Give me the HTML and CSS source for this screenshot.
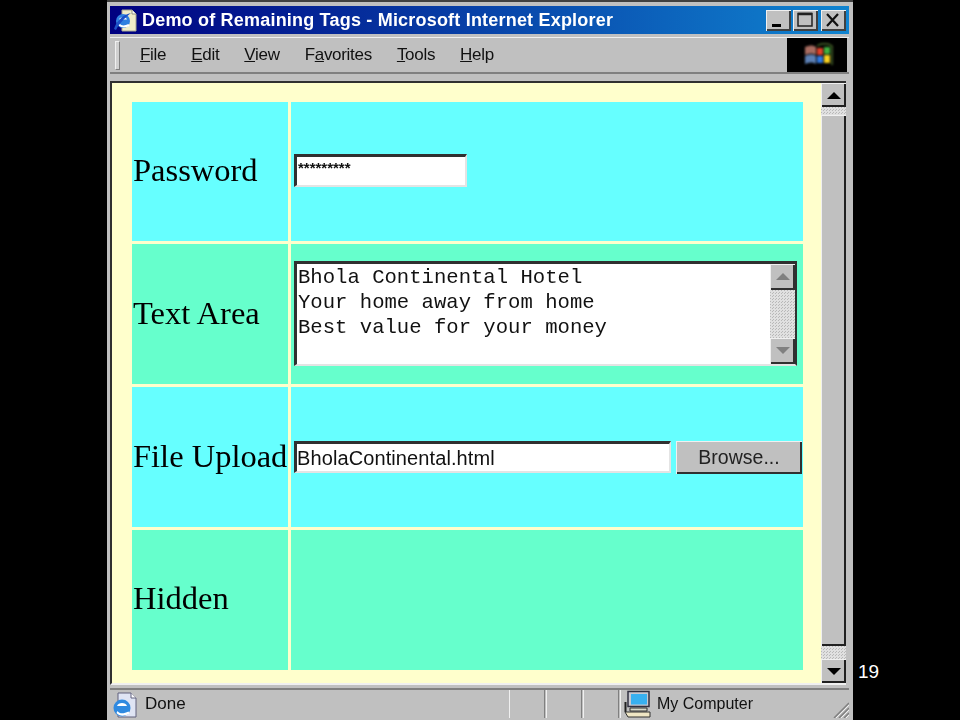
FILE: index.html
```html
<!DOCTYPE html>
<html>
<head>
    <meta charset="UTF-8">
    <link rel="stylesheet" href="styles.css">
</head>
<body>
    <div class="window">
        <div class="titlebar">
            <svg class="title-icon" width="25" height="25" viewBox="0 0 25 25">
                <path d="M9 2h10l4 4v17H9z" fill="#f0ecc8" stroke="#a8a890"/>
                <path d="M19 2v4h4" fill="#fff" stroke="#909080"/>
                <circle cx="10" cy="13" r="7" fill="#2f80e0"/>
                <path d="M6 11.5c1-3 7-3 8 0z" fill="#fff"/>
                <path d="M6.5 15.5c2 2.500 5 2.500 9 .5l1 2c-4 2-8 2-11-.5z" fill="#fff"/>
                <path d="M1 21C3 14 9 7 18 5c-3 2-11 9-15 17z" fill="#1c50c8"/>
            </svg>
            <div class="title-text">Demo of Remaining Tags - Microsoft Internet Explorer</div>
            <div class="title-buttons">
                <div class="win-btn">
                    <svg width="25" height="21" viewBox="0 0 25 21"><rect x="6" y="14" width="9" height="3" fill="#000"/></svg>
                </div>
                <div class="win-btn">
                    <svg width="25" height="21" viewBox="0 0 25 21"><path d="M5 3.500h14v12.500H5z" fill="none" stroke="#222" stroke-width="1.500"/><path d="M5 4h14" stroke="#222" stroke-width="2.500"/></svg>
                </div>
                <div class="win-btn win-btn-close">
                    <svg width="25" height="21" viewBox="0 0 25 21"><path d="M6 4l11 12M17 4L6 16" stroke="#111" stroke-width="2.200"/></svg>
                </div>
            </div>
        </div>

        <div class="menubar">
            <div class="grip"></div>
            <div class="menu-items">
                <span><u>F</u>ile</span>
                <span><u>E</u>dit</span>
                <span><u>V</u>iew</span>
                <span>F<u>a</u>vorites</span>
                <span><u>T</u>ools</span>
                <span><u>H</u>elp</span>
            </div>
            <div class="throbber">
                <svg class="flag" width="30" height="24" viewBox="0 0 30 24">
                    <path d="M1 4c4-2 8-2 11 0v8c-3-2-7-2-11 0z" fill="#a86c60"/>
                    <path d="M1 13c4-2 8-2 11 0v8c-3-2-7-2-11 0z" fill="#5c80b4"/>
                    <rect x="13" y="5" width="6" height="7" fill="#e04028"/>
                    <rect x="20" y="4" width="6" height="7" fill="#40b040"/>
                    <rect x="13" y="13" width="6" height="7" fill="#3078e0"/>
                    <rect x="20" y="12" width="6" height="8" fill="#f8d020"/>
                    <path d="M13 3c4-3 11-3 15 0v19" fill="none" stroke="#4a6a2c" stroke-width="1.500"/>
                </svg>
            </div>
        </div>

        <div class="viewport">
            <div class="page">
                <div class="form-table">
                    <div class="cell label cyan">Password</div>
                    <div class="cell cyan">
                        <div class="field field-password">*********</div>
                    </div>
                    <div class="cell label mint">Text Area</div>
                    <div class="cell mint">
                        <div class="field field-textarea">
                            <div class="textarea-text">Bhola Continental Hotel<br>Your home away from home<br>Best value for your money</div>
                            <div class="mini-scroll">
                                <div class="mini-btn"><div class="arrow-up arrow-grey"></div></div>
                                <div class="dither"></div>
                                <div class="mini-btn"><div class="arrow-down arrow-grey"></div></div>
                            </div>
                        </div>
                    </div>
                    <div class="cell label cyan">File Upload</div>
                    <div class="cell cyan upload">
                        <div class="field field-file">BholaContinental.html</div>
                        <div class="browse">Browse...</div>
                    </div>
                    <div class="cell label mint label-hidden">Hidden</div>
                    <div class="cell mint"></div>
                </div>
            </div>
            <div class="scrollbar">
                <div class="scroll-btn"><div class="arrow-up"></div></div>
                <div class="dither dither-top"></div>
                <div class="thumb"></div>
                <div class="dither dither-bottom"></div>
                <div class="scroll-btn"><div class="arrow-down"></div></div>
            </div>
        </div>

        <div class="statusbar">
            <svg class="status-icon" width="26" height="26" viewBox="0 0 26 26">
                <path d="M6 1h13l5 5v19H6z" fill="#dfe4f4" stroke="#60607c"/>
                <path d="M19 1v5h5" fill="#fff" stroke="#60607c"/>
                <circle cx="10" cy="16" r="8.500" fill="#2f8ae0"/>
                <path d="M5 14c1-4 9-4 10 0z" fill="#fff"/>
                <path d="M5.500 19c2 3 6 3 11 .5l1 2c-5 3-10 3-13-.5z" fill="#fff"/>
            </svg>
            <div class="status-main">Done</div>
            <div class="pane"></div>
            <div class="pane"></div>
            <div class="pane"></div>
            <div class="zone">
                <svg width="28" height="28" viewBox="0 0 28 28">
                    <path d="M4 1.500h21v15H4z" fill="#c8c8d0" stroke="#303040" stroke-width="1.500"/>
                    <rect x="7" y="4" width="16" height="10.500" fill="#38b0f0"/>
                    <path d="M1.500 12v10" stroke="#202020" stroke-width="2"/>
                    <path d="M6 18h17v3H6z" fill="#d8d8c8" stroke="#303030"/>
                    <path d="M1 22l3 5h22v-5z" fill="#efe6c4" stroke="#303030"/>
                </svg>
                <span>My Computer</span>
            </div>
            <svg class="resize-grip" width="18" height="18" viewBox="0 0 18 18">
                <path d="M3 18L18 3M8 18L18 8M13 18l5-5" stroke="#808080" stroke-width="1.500"/>
                <path d="M5 18L18 5M10 18l8-8M15 18l3-3" stroke="#f0f0f0" stroke-width="1"/>
            </svg>
        </div>
    </div>

    <div class="page-number">19</div>
</body>
</html>
```

FILE: styles.css
```css
html, body {
    margin: 0;
    height: 100%;
    overflow: hidden;
    background: #000;
}

body {
    position: relative;
    font-family: "Liberation Sans", Arial, sans-serif;
}

.window {
    width: 746px;
    height: 720px;
    margin-left: 107px;
    box-sizing: border-box;
    padding: 6px 4px 0 3px;
    background: #c0c0c0;
    border-top: 2px solid #404040;
    display: flex;
    flex-direction: column;
    filter: blur(0.4px);
}

.window > .titlebar {
    margin-top: -2px;
}

/* title bar */
.titlebar {
    height: 28px;
    flex: none;
    display: flex;
    align-items: center;
    background: linear-gradient(90deg, #000080, #1084d0);
    color: #fff;
}

.title-icon {
    margin-left: 3px;
    flex: none;
}

.title-text {
    margin-left: 4px;
    flex: 1;
    font-size: 18px;
    font-weight: 700;
    letter-spacing: 0.2px;
    white-space: nowrap;
}

.title-buttons {
    display: flex;
    margin-right: 3px;
}

.win-btn {
    width: 25px;
    height: 21px;
    margin-left: 2px;
    background: #c0c0c0;
    box-shadow: inset 1px 1px 0 #f0f0f0, inset -2px -2px 0 #404040;
}

.win-btn-close {
    margin-left: 3px;
}

.win-btn svg {
    display: block;
}

/* menu */
.menubar {
    height: 37px;
    flex: none;
    margin-top: 3px;
    display: flex;
    align-items: stretch;
    border-top: 1px solid #f0f0f0;
    border-bottom: 2px solid #808080;
    box-sizing: border-box;
}

.grip {
    width: 3px;
    margin: 3px 0 2px 5px;
    background: #d0d0d0;
    border: 1px solid #808080;
    border-left-color: #f0f0f0;
    border-top-color: #f0f0f0;
}

.menu-items {
    flex: 1;
    display: flex;
    align-items: center;
    gap: 25px;
    padding-left: 20px;
    font-size: 17px;
    color: #111;
    letter-spacing: -0.3px;
}

.throbber {
    width: 60px;
    margin-right: 2px;
    padding-left: 4px;
    box-sizing: border-box;
    background: #000;
    display: flex;
    align-items: center;
    justify-content: center;
}

.flag {
    filter: blur(0.8px);
}

/* page area */
.viewport {
    height: 604px;
    flex: none;
    margin: 7px 3px 0 0;
    display: flex;
    border-top: 2px solid #303030;
    border-left: 2px solid #303030;
    border-bottom: 2px solid #f0f0f0;
    box-sizing: border-box;
    background: #ffffcc;
}

.page {
    flex: 1;
    padding: 19px 0 0 20px;
}

.form-table {
    display: grid;
    grid-template-columns: 156px 1fr;
    grid-template-rows: 139px 140px 140px 140px;
    gap: 3px;
    width: 671px;
}

.cell {
    display: flex;
    align-items: center;
    min-width: 0;
    padding-left: 3px;
}

.cyan {
    background: #66ffff;
}

.mint {
    background: #66ffcc;
}

.label {
    padding-left: 1px;
    font-family: "Liberation Serif", "Times New Roman", serif;
    font-size: 32.5px;
    color: #000;
    white-space: nowrap;
    padding-bottom: 2px;
    box-sizing: border-box;
}

.label-hidden {
    padding-bottom: 4px;
}

/* form fields */
.field {
    box-sizing: border-box;
    background: #fff;
    border: 2px solid #e4e4e4;
    border-top: 3px solid #303030;
    border-left: 3px solid #303030;
    color: #111;
}

.field-password {
    width: 173px;
    height: 33px;
    margin-bottom: 2px;
    padding: 3px 0 0 1px;
    font-size: 15px;
    font-weight: 700;
    line-height: 15px;
    overflow: hidden;
}

.field-textarea {
    width: 503px;
    height: 105px;
    margin-bottom: 2px;
    display: flex;
    border-right-color: #303030;
}

.textarea-text {
    flex: 1;
    padding: 1px 0 0 1px;
    font-family: "Liberation Mono", "Courier New", monospace;
    font-size: 20.6px;
    line-height: 25px;
    white-space: nowrap;
}

.mini-scroll {
    width: 25px;
    display: flex;
    flex-direction: column;
}

.mini-btn {
    height: 26px;
    flex: none;
    display: flex;
    align-items: center;
    justify-content: center;
    background: #c0c0c0;
    box-shadow: inset 1px 1px 0 #f0f0f0, inset -2px -2px 0 #303030;
}

.upload {
    gap: 5px;
}

.field-file {
    width: 377px;
    height: 32px;
    font-size: 20px;
    line-height: 28px;
    letter-spacing: 0.1px;
    white-space: nowrap;
}

.browse {
    width: 126px;
    height: 33px;
    box-sizing: border-box;
    text-align: center;
    background: #c0c0c0;
    box-shadow: inset 1px 1px 0 #f0f0f0, inset -2px -2px 0 #303030;
    color: #222;
    font-size: 19.5px;
    line-height: 33px;
}

/* page scrollbar */
.scrollbar {
    width: 25px;
    flex: none;
    display: flex;
    flex-direction: column;
}

.scroll-btn {
    height: 24px;
    flex: none;
    display: flex;
    align-items: center;
    justify-content: center;
    background: #c0c0c0;
    box-shadow: inset 1px 1px 0 #f0f0f0, inset -2px -2px 0 #202020;
}

.dither {
    flex: 1;
    background-color: #e0e0e0;
    background-image: linear-gradient(45deg, #b8b8b8 25%, transparent 25%, transparent 75%, #b8b8b8 75%);
    background-size: 3px 3px;
}

.dither-top {
    flex: none;
    height: 8px;
}

.dither-bottom {
    flex: none;
    height: 13px;
}

.thumb {
    flex: 1;
    background: #c0c0c0;
    box-shadow: inset 1px 1px 0 #f0f0f0, inset -2px -2px 0 #202020;
}

.arrow-up, .arrow-down {
    width: 0;
    height: 0;
    border-left: 7px solid transparent;
    border-right: 7px solid transparent;
}

.arrow-up {
    border-bottom: 7px solid #000;
}

.arrow-down {
    border-top: 7px solid #000;
}

.arrow-up.arrow-grey {
    border-bottom-color: #808080;
}

.arrow-down.arrow-grey {
    border-top-color: #808080;
}

/* status bar */
.statusbar {
    flex: 1;
    margin-top: 3px;
    margin-bottom: 3px;
    display: flex;
    align-items: stretch;
    border-top: 2px solid #808080;
    font-size: 17px;
    color: #111;
    position: relative;
}

.status-icon {
    flex: none;
    margin: 2px 0 0 2px;
}

.status-main {
    width: 364px;
    padding: 4px 0 0 7px;
}

.pane {
    width: 34px;
    border-left: 1px solid #f0f0f0;
    border-right: 1px solid #808080;
    margin-right: 1px;
}

.zone {
    flex: 1;
    display: flex;
    align-items: center;
    gap: 5px;
    padding-left: 3px;
    border-left: 1px solid #f0f0f0;
    font-size: 16px;
}

.resize-grip {
    position: absolute;
    right: 0;
    bottom: 0;
}

.page-number {
    position: absolute;
    left: 858px;
    top: 661px;
    color: #fff;
    font-size: 19px;
}
```
